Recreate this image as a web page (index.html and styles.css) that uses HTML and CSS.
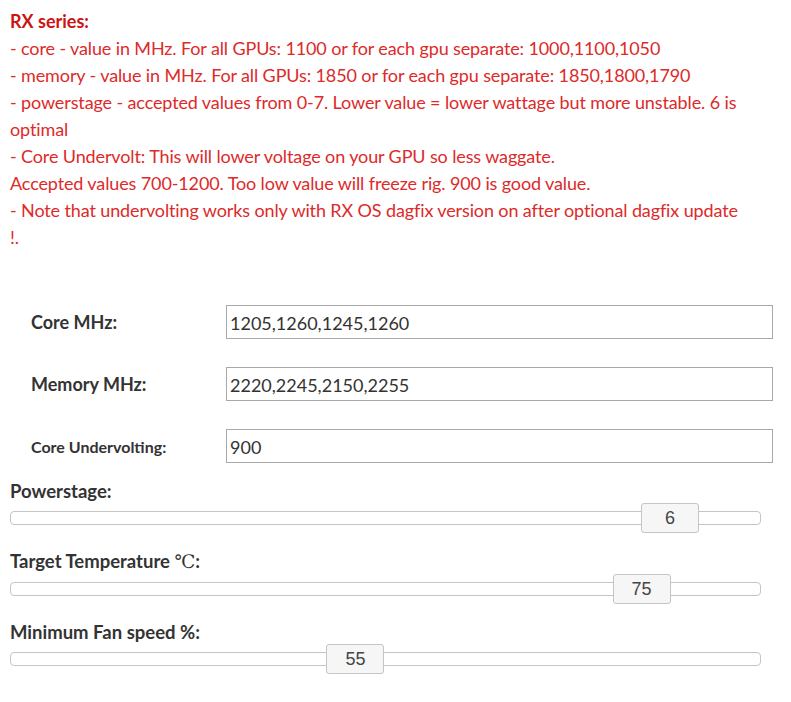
FILE: index.html
```html
<!DOCTYPE html>
<html lang="en">
<head>
    <meta charset="UTF-8">
    <title>RX series settings</title>
    <link rel="stylesheet" href="styles.css">
</head>
<body>
    <div class="page">
        <div class="notes">
            <b class="notes-title">RX series:</b><br>
            - core - value in MHz. For all GPUs: 1100 or for each gpu separate: 1000,1100,1050<br>
            - memory - value in MHz. For all GPUs: 1850 or for each gpu separate: 1850,1800,1790<br>
            - powerstage - accepted values from 0-7. Lower value = lower wattage but more unstable. 6 is optimal<br>
            - Core Undervolt: This will lower voltage on your GPU so less waggate.<br>
            Accepted values 700-1200. Too low value will freeze rig. 900 is good value.<br>
            - Note that undervolting works only with RX OS dagfix version on after optional dagfix update !.
        </div>

        <div class="fields">
            <div class="field-row">
                <label class="field-label">Core MHz:</label>
                <input class="field-input" type="text" value="1205,1260,1245,1260">
            </div>
            <div class="field-row">
                <label class="field-label">Memory MHz:</label>
                <input class="field-input" type="text" value="2220,2245,2150,2255">
            </div>
            <div class="field-row">
                <label class="field-label small">Core Undervolting:</label>
                <input class="field-input" type="text" value="900">
            </div>
        </div>

        <div class="slider-group">
            <div class="slider-label">Powerstage:</div>
            <div class="slider">
                <div class="slider-track"></div>
                <span class="slider-handle" style="left: 87.9%">6</span>
            </div>
        </div>

        <div class="slider-group">
            <div class="slider-label">Target Temperature <span class="unit">℃</span>:</div>
            <div class="slider">
                <div class="slider-track"></div>
                <span class="slider-handle" style="left: 84.1%">75</span>
            </div>
        </div>

        <div class="slider-group">
            <div class="slider-label">Minimum Fan speed %:</div>
            <div class="slider">
                <div class="slider-track"></div>
                <span class="slider-handle" style="left: 46%">55</span>
            </div>
        </div>
    </div>
</body>
</html>
```

FILE: styles.css
```css
* {
    margin: 0;
    padding: 0;
    box-sizing: border-box;
}

body {
    font-family: Lato, 'Open Sans', sans-serif;
    background: #fff;
    color: #333;
}

.page {
    padding: 8px 18px 20px 10px;
}

.notes {
    color: #dd2a2a;
    font-size: 18px;
    letter-spacing: -0.12px;
    line-height: 27px;
    padding-right: 31px;
}

.notes-title {
    color: #cc1414;
    font-weight: bold;
    letter-spacing: 0;
}

.fields {
    margin-top: 54px;
    display: flex;
    flex-direction: column;
    gap: 28px;
}

.field-row {
    display: flex;
    align-items: center;
}

.field-label {
    width: 216px;
    padding-left: 21px;
    font-size: 18px;
    font-weight: bold;
    color: #333;
}

.field-label.small {
    font-size: 16px;
}

.field-input {
    flex: 1;
    height: 34px;
    border: 1px solid #a9a9a9;
    padding: 2px 3px 0;
    font-family: inherit;
    font-size: 18px;
    color: #333;
    outline: none;
}

.slider-group {
    margin-top: 16px;
    margin-right: 12px;
}

.slider-label {
    font-size: 18.5px;
    font-weight: bold;
    line-height: 24px;
    color: #333;
}

.unit {
    font-family: 'Liberation Serif', 'DejaVu Serif', serif;
    font-weight: normal;
}

.slider {
    position: relative;
    height: 30px;
    padding-top: 8px;
}

.slider-track {
    height: 14px;
    border: 1px solid #c5c5c5;
    border-radius: 4px;
    background: #fff;
}

.slider-handle {
    position: absolute;
    top: 0;
    width: 58px;
    height: 30px;
    margin-left: -29px;
    background: #f6f6f6;
    border: 1px solid #c5c5c5;
    border-radius: 3px;
    font-family: 'Liberation Sans', Arial, sans-serif;
    font-size: 18px;
    line-height: 28px;
    text-align: center;
    color: #454545;
}
```
